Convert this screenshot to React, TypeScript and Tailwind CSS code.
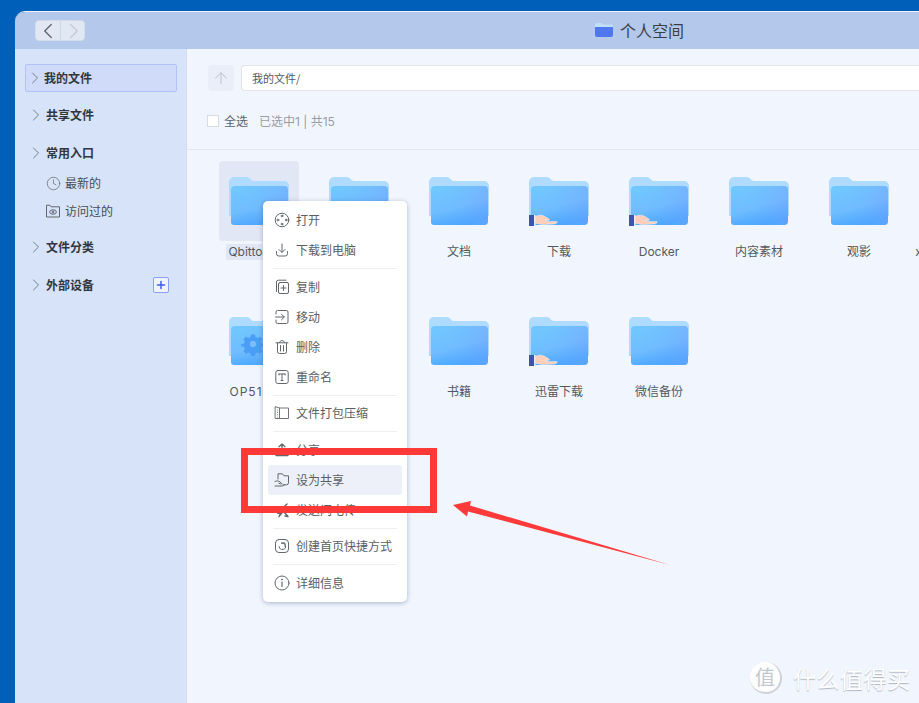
import React from "react";
import { ChevronLeft, ChevronRight, ArrowUp, Plus, Clock } from "lucide-react";

const FONT = "font-['Noto_Sans_CJK_SC','Noto_Sans',sans-serif]";

function Folder({ id, kind }: { id: string; kind?: "hand" | "gear" }) {
  return (
    <svg width="60" height="50" viewBox="0 0 60 50" className="block shrink-0">
      <defs>
        <linearGradient id={`f${id}`} x1="0.15" y1="0.05" x2="0.55" y2="1">
          <stop offset="0" stopColor="#70c8ff" />
          <stop offset="0.55" stopColor="#6fbcff" />
          <stop offset="1" stopColor="#3ea0ff" />
        </linearGradient>
        <linearGradient id={`g${id}`} x1="0" y1="0" x2="1" y2="0">
          <stop offset="0" stopColor="#72c6ff" stopOpacity="0" />
          <stop offset="1" stopColor="#7aa8ff" stopOpacity="0.5" />
        </linearGradient>
      </defs>
      <path d="M0 5a5 5 0 0 1 5-5h13c3 0 4 4 7 4h30a5 5 0 0 1 5 5v30H0z" fill="#aedbff" />
      <path d="M2 13a4 4 0 0 1 4-4h49a4 4 0 0 1 4 4v31a4 4 0 0 1-4 4H5a3 3 0 0 1-3-3z" fill={`url(#f${id})`} />
      <path d="M2 13a4 4 0 0 1 4-4h49a4 4 0 0 1 4 4v31a4 4 0 0 1-4 4H5a3 3 0 0 1-3-3z" fill={`url(#g${id})`} />
      {kind === "gear" && (
        <g fill="#4a9ef5" transform="translate(24 27)">
          <path d="M-2-9.5h4l.6 2.7 2.4 1 2.4-1.5 2.7 2.7-1.5 2.4 1 2.4 2.7.6v2l-2.7.6-1 2.4 1.5 2.4-2.7 2.7-2.4-1.5-2.4 1-.6 2.7h-4l-.6-2.7-2.4-1-2.4 1.5-2.7-2.7 1.5-2.4-1-2.4-2.7-.6v-2l2.7-.6 1-2.4-1.5-2.4 2.7-2.7 2.4 1.5 2.4-1z" transform="translate(0 -.5) scale(.95)" />
          <circle r="3.2" fill="#7cbcfc" />
        </g>
      )}
      {kind === "hand" && (
        <g>
          <rect x="0" y="38" width="5" height="11" fill="#3e52b4" />
          <rect x="5" y="38" width="1.5" height="11" fill="#e6ecfc" />
          <path d="M6.5 39.5c3-1.8 6.5-1.8 9.5 0l4 2.6c1 .9 0 1.6-1 1.4l-3-.5 3 1.6h9c.6.8-.6 2.2-2.5 2.4l-10 .6c-4 .2-6-1-9-1.4z" fill="#fdceb9" stroke="#fff" strokeWidth="0.4" />
        </g>
      )}
    </svg>
  );
}

type Item = { name: string; kind?: "hand" | "gear"; sel?: boolean };
const row1: Item[] = [
  { name: "Qbittorrent", sel: true },
  { name: "" },
  { name: "文档" },
  { name: "下载", kind: "hand" },
  { name: "Docker", kind: "hand" },
  { name: "内容素材" },
  { name: "观影" },
  { name: "xunlei-backups" },
];
const row2: Item[] = [
  { name: "OP5100X", kind: "gear" },
  { name: "" },
  { name: "书籍" },
  { name: "迅雷下载", kind: "hand" },
  { name: "微信备份" },
];

function Cell({ it, id }: { it: Item; id: string }) {
  return (
    <div className={`w-[80px] h-[80px] mr-[20px] shrink-0 rounded-[4px] flex flex-col items-center pt-[16px] ${it.sel ? "bg-[#e2e7f5]" : ""}`}>
      <Folder id={id} kind={it.kind} />
      <div className={`mt-[17px] h-[16px] shrink-0 font-['Inter','Noto_Sans_CJK_SC',sans-serif] text-[12px] leading-[16px] text-[#54585f] whitespace-nowrap px-[2px] ${it.sel ? "bg-[#e2e7f5] rounded-[2px]" : ""} ${it.kind === "gear" ? "tracking-[1px]" : ""}`}>{it.name}</div>
    </div>
  );
}

const ic = { width: 16, height: 16, viewBox: "0 0 16 16", fill: "none", stroke: "#62666d", strokeWidth: 1, strokeLinecap: "round" as const, strokeLinejoin: "round" as const };

const IconOpen = () => (
  <svg {...ic}><circle cx="8" cy="8" r="6.8" /><circle cx="8" cy="3.9" r="0.9" /><circle cx="8" cy="12.1" r="0.9" /><circle cx="3.9" cy="8" r="0.9" /><circle cx="12.1" cy="8" r="0.9" /></svg>
);
const IconDown = () => <svg {...ic}><path d="M8 2v8M5 7.5 8 10.5 11 7.5M2.5 9.5v2.2a2.3 2.3 0 0 0 2.3 2.3h6.4a2.3 2.3 0 0 0 2.3-2.3V9.5" /></svg>;
const IconCopy = () => <svg {...ic}><path d="M2.5 12.5V3A1.8 1.8 0 0 1 4.3 1.2H12" /><rect x="4.5" y="3.5" width="10" height="11" rx="1.5" /><path d="M9.5 6.5v5M7 9h5" /></svg>;
const IconMove = () => <svg {...ic}><path d="M2 5V3a1.5 1.5 0 0 1 1.5-1.5h9A1.5 1.5 0 0 1 14 3v10a1.5 1.5 0 0 1-1.5 1.5h-9A1.5 1.5 0 0 1 2 13v-2" /><path d="M1.5 8h8.5M7.5 5.2 10.3 8 7.5 10.8" /></svg>;
const IconTrash = () => <svg {...ic}><path d="M2 3.8h12M5.5 3.5c0-2.6 5-2.6 5 0M3.5 4v8.5a2 2 0 0 0 2 2h5a2 2 0 0 0 2-2V4M6.5 6.5v5.5M9.5 6.5v5.5" /></svg>;
const IconT = () => <svg {...ic}><rect x="1.8" y="1.5" width="12.4" height="13" rx="2" /><path d="M5 5h6M8 5v6.5M7 11.5h2M5 5v1M11 5v1" /></svg>;
const IconZip = () => <svg {...ic} strokeWidth="0.9"><path d="M1.5 1.8 5.5 3h9v10.5h-13zM5.5 3v10.5" /><path d="M3.5 4.5v8" strokeWidth="0.8" strokeDasharray="1 1.4" strokeLinecap="butt" /></svg>;
const IconShare = () => <svg {...ic}><path d="M8 11V2M5 4.8 8 2l3 2.8M2 13.5h12" strokeWidth="1.3" /></svg>;
const IconSetShare = () => <svg {...ic}><path d="M4 7V1.8h4.5l1.5 2h4.5v7a2 2 0 0 1-2 2H9" /><path d="M1 9.5c2-1 3.5-.8 5 .5l1.5 1c.7.6 0 1.2-.8 1L5 11.3M1 14h7.5l2-1.2" /></svg>;
const IconSend = () => <svg {...ic} strokeWidth="1.4"><path d="M13 2 3.5 11l3 .5L5 14.5l4-5M9.5 9.5l4.5 5-3-.5" /></svg>;
const IconHome = () => <svg {...ic}><rect x="1.5" y="1.5" width="13" height="13" rx="3.5" /><path d="M5.2 8.8a3.2 3.2 0 1 0 2.3-3.6M7.5 5H11v3.5" /></svg>;
const IconInfo = () => <svg {...ic}><circle cx="8" cy="8" r="7" /><path d="M8 7v4.5" strokeWidth="1.2" /><circle cx="8" cy="4.6" r="0.5" fill="#62666d" /></svg>;

type Row = { t: string; i: React.ReactNode; hi?: boolean } | "sep7" | "sep6";
const menu: Row[] = [
  { t: "打开", i: <IconOpen /> },
  { t: "下载到电脑", i: <IconDown /> },
  "sep7",
  { t: "复制", i: <IconCopy /> },
  { t: "移动", i: <IconMove /> },
  { t: "删除", i: <IconTrash /> },
  { t: "重命名", i: <IconT /> },
  "sep6",
  { t: "文件打包压缩", i: <IconZip /> },
  "sep7",
  { t: "分享", i: <IconShare /> },
  { t: "设为共享", i: <IconSetShare />, hi: true },
  { t: "发送闪电传", i: <IconSend /> },
  "sep6",
  { t: "创建首页快捷方式", i: <IconHome /> },
  "sep7",
  { t: "详细信息", i: <IconInfo /> },
];

function Group({ label, active, extra }: { label: string; active?: boolean; extra?: React.ReactNode }) {
  return (
    <div className={`h-[28px] flex items-center border rounded-[2px] ${active ? "bg-[#d0dbf9] border-[#b2c1fb]" : "border-transparent"}`}>
      <span className={`shrink-0 ${active ? "-ml-[1px] -mr-[1px]" : ""}`}>
        <ChevronRight size={20} strokeWidth={1.1} color="#70757e" />
      </span>
      <span className="text-[12px] leading-[16px] font-bold text-[#33373d]">{label}</span>
      {extra}
    </div>
  );
}

export default function App() {
  return (
    <div className={`relative w-[919px] h-[703px] overflow-hidden bg-[#005fb8] pl-[15px] pt-[11px] ${FONT}`}>
      <div className="w-[904px] h-[692px] rounded-tl-[10px] overflow-hidden border-t border-t-[#eef4fc] flex flex-col">
        {/* title bar */}
        <div className="relative h-[37px] shrink-0 bg-[#b3c8ea] flex items-center pl-[20px]">
          <div className="flex h-[21px] w-[50px] rounded-[4px] bg-[#e1e8f3] border border-[#d3dcea]">
            <div className="w-[25px] flex items-center justify-center border-r border-r-[#cfd7e4]">
              <ChevronLeft size={26} strokeWidth={1.2} color="#5e6268" className="shrink-0" />
            </div>
            <div className="flex-1 flex items-center justify-center">
              <ChevronRight size={26} strokeWidth={1.2} color="#c6cbd3" className="shrink-0" />
            </div>
          </div>
          <div className="ml-[510px] -mt-[2px] flex items-center">
            <svg width="18" height="14" viewBox="0 0 18 14" className="block">
              <path d="M0 2a2 2 0 0 1 2-2h4l2 1.5h8a2 2 0 0 1 2 2V6H0z" fill="#bfe0fb" />
              <path d="M0 4h18v8a2 2 0 0 1-2 2H2a2 2 0 0 1-2-2z" fill="#4f78f0" />
            </svg>
            <span className="ml-[7px] text-[16px] leading-[22px] text-[#3b3f45]">个人空间</span>
          </div>
        </div>
        <div className="flex-1 flex min-h-0">
          {/* sidebar */}
          <div className="w-[172px] shrink-0 bg-[#d7e3f8] border-r border-r-[#d2ddf2] pl-[10px] pr-[9px] pt-[15px]">
            <Group label="我的文件" active />
            <div className="mt-[9px]"><Group label="共享文件" /></div>
            <div className="mt-[10px]"><Group label="常用入口" /></div>
            <div className="h-[28px] mt-[2px] flex items-center pl-[21px] text-[12px] text-[#474b52]">
              <Clock size={15} strokeWidth={1} color="#55595f" />
              <span className="ml-[4px]">最新的</span>
            </div>
            <div className="h-[28px] flex items-center pl-[21px] text-[12px] text-[#474b52]">
              <svg width="14" height="14" viewBox="0 0 14 14" fill="none" stroke="#55595f" strokeWidth="0.9">
                <path d="M.5 13V1.2h3.4l1.2 1.6h8.4V13z" />
                <ellipse cx="7" cy="8" rx="3.4" ry="2.2" />
                <circle cx="7" cy="8" r="0.9" />
              </svg>
              <span className="ml-[5px]">访问过的</span>
            </div>
            <div className="mt-[8px]"><Group label="文件分类" /></div>
            <div className="mt-[10px]">
              <Group
                label="外部设备"
                extra={
                  <span className="ml-auto mr-[7px] w-[16px] h-[16px] rounded-[2px] bg-[#eef3fd] border border-[#8ba0fa] flex items-center justify-center">
                    <Plus size={12} strokeWidth={3} color="#3d5cf5" />
                  </span>
                }
              />
            </div>
          </div>
          {/* main */}
          <div className="flex-1 min-w-0 bg-[#f1f6fe] flex flex-col">
            <div className="h-[101px] shrink-0 border-b border-b-[#e2e6ee] pl-[21px] pt-[16px]">
              <div className="flex h-[26px]">
                <div className="w-[26px] rounded-[4px] bg-[#e9eef8] flex items-center justify-center">
                  <ArrowUp size={18} strokeWidth={1.4} color="#c0c6d0" />
                </div>
                <div className="ml-[7px] flex-1 bg-white border border-r-0 border-[#e2e4e8] rounded-l-[4px] pl-[10px] flex items-center text-[11px] text-[#54585f]">我的文件/</div>
              </div>
              <div className="mt-[23px] -ml-[1px] flex items-center h-[14px] text-[12px]">
                <span className="w-[12px] h-[12px] bg-white border border-[#d8dbe2]" />
                <span className="ml-[5px] text-[#5e6269]">全选</span>
                <span className="ml-[11px] pt-[2px] text-[#9a9da4] font-['Inter','Noto_Sans_CJK_SC',sans-serif]">已选中1 | 共15</span>
              </div>
            </div>
            <div className="flex-1 min-h-0 pl-[32px] pt-[11px] flex flex-col gap-[60px]">
              <div className="flex shrink-0">{row1.map((it, i) => <Cell key={i} it={it} id={`a${i}`} />)}</div>
              <div className="flex shrink-0">{row2.map((it, i) => <Cell key={i} it={it} id={`b${i}`} />)}</div>
            </div>
          </div>
        </div>
      </div>

      {/* context menu */}
      <div className="absolute left-[263px] top-[201px] w-[144px] bg-white rounded-[5px] shadow-[0_1px_5px_rgba(60,80,120,0.4)] px-[5px] py-[4px] text-[12px] text-[#5a5e65]">
        {menu.map((m, i) =>
          m === "sep7" || m === "sep6" ? (
            <div key={i} className={`flex items-center px-[5px] ${m === "sep7" ? "h-[7px]" : "h-[6px]"}`}><div className="h-px w-full bg-[#eceef1]" /></div>
          ) : (
            <div key={i} className={`h-[30px] flex items-center pl-[6px] rounded-[3px] ${m.hi ? "bg-[#edf0f8]" : ""}`}>
              <span className="w-[16px] h-[16px] shrink-0">{m.i}</span>
              <span className="ml-[6px] whitespace-nowrap">{m.t}</span>
            </div>
          )
        )}
      </div>

      {/* annotation overlays */}
      <div className="absolute left-[241px] top-[448px] w-[196px] h-[65px] border-[7px] border-[#ff3838]" />
      <svg className="absolute left-0 top-0 pointer-events-none" width="919" height="703" viewBox="0 0 919 703">
        <path d="M453 505 471 501 470 505.5 670 565 468 511.5 467 516.5z" fill="#ff3a3a" />
      </svg>

      {/* watermark */}
      <div className="absolute left-[750px] top-[662px] flex items-center text-white [text-shadow:0_1px_1px_rgba(90,100,120,0.45)]">
        <span className="w-[32px] h-[32px] rounded-full bg-white/90 border-r-2 border-b-2 border-[#cdd2da] flex items-center justify-center text-[20px] leading-none text-[#c3c7ce] [text-shadow:none]">值</span>
        <span className="ml-[11px] text-[23px] leading-[30px] tracking-[0.5px]">什么值得买</span>
      </div>
    </div>
  );
}
